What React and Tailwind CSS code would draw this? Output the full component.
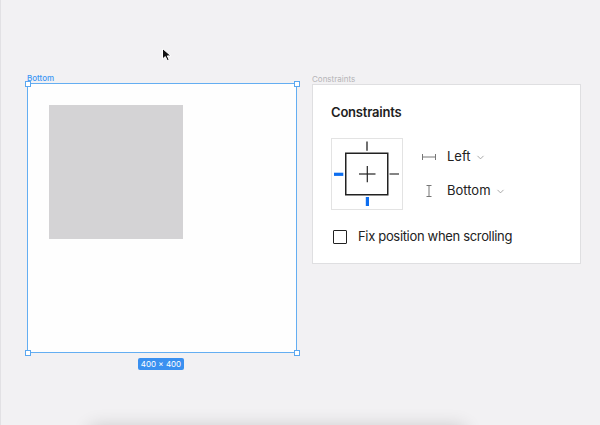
import { ChevronDown } from 'lucide-react'

const font = { fontFamily: 'Inter, "Noto Sans", sans-serif' }

function Handle({ className }) {
  return <div className={`absolute w-[6px] h-[6px] bg-white border border-[#5aa7f0] ${className}`} />
}

function ConstraintWidget() {
  return (
    <svg width="72" height="72" viewBox="0 0 72 72" className="shrink-0">
      <rect x="0.5" y="0.5" width="71" height="71" fill="#fff" stroke="#e3e3e3" />
      <rect x="14.75" y="15.25" width="42" height="41.5" fill="none" stroke="#222" strokeWidth="1.5" />
      <line x1="28" y1="36" x2="44.5" y2="36" stroke="#222" strokeWidth="1.2" />
      <line x1="36.3" y1="28" x2="36.3" y2="44.3" stroke="#222" strokeWidth="1.2" />
      <line x1="36" y1="3.5" x2="36" y2="12.7" stroke="#333" strokeWidth="1.4" />
      <line x1="58.5" y1="36" x2="68" y2="36" stroke="#333" strokeWidth="1.2" />
      <line x1="3" y1="36.3" x2="12.3" y2="36.3" stroke="#0d6ef0" strokeWidth="3.2" />
      <line x1="36.4" y1="59" x2="36.4" y2="68" stroke="#0d6ef0" strokeWidth="3.2" />
    </svg>
  )
}

function HIcon() {
  return (
    <svg width="14" height="8" viewBox="0 0 14 8">
      <path d="M0.5 1v6M13.5 1v6M0.5 4h13" stroke="#777" strokeWidth="1" fill="none" />
    </svg>
  )
}

function VIcon() {
  return (
    <svg width="14" height="12" viewBox="0 0 14 12">
      <path d="M4.5 0.5h5M4.5 11.5h5M7 0.5v11" stroke="#777" strokeWidth="1" fill="none" />
    </svg>
  )
}

function Cursor() {
  return (
    <svg width="14" height="16" viewBox="0 0 14 16" className="absolute left-[160px] top-[47px]">
      <path d="M1.5 1.5 L1.5 12 L4.3 9.6 L6.3 13.6 L8.2 12.7 L6.3 8.9 L10 8.9 Z" fill="#111" stroke="#fff" strokeWidth="1" strokeLinejoin="round" />
    </svg>
  )
}

export default function App() {
  return (
    <div style={font} className="relative w-[600px] h-[425px] overflow-hidden bg-[#f2f1f3] border-l border-[#e2e1e4]">
      <Cursor />
      <div className="flex pt-[74px] pl-[26px]">
        <div className="w-[270px]">
          <div className="text-[8px] leading-[9px] font-medium text-[#3d97f3]">Bottom</div>
          <div className="relative w-[270px] h-[270px] border-[1.5px] border-[#64aef2] bg-[#fefefe]">
            <Handle className="-left-[3.5px] -top-[3.5px]" />
            <Handle className="-right-[3.5px] -top-[3.5px]" />
            <Handle className="-left-[3.5px] -bottom-[3.5px]" />
            <Handle className="-right-[3.5px] -bottom-[3.5px]" />
            <div className="ml-[20.5px] mt-[20.5px] w-[134px] h-[134px] bg-[#d4d3d5]" />
          </div>
          <div className="flex justify-center mt-[5px] pr-[2px]">
            <div className="h-[12px] px-[3px] rounded-[2px] bg-[#3a90f0] text-white text-[8px] leading-[12px]">400 × 400</div>
          </div>
        </div>

        <div className="ml-[15px] w-[269px]">
          <div className="text-[8px] leading-[10px] text-[#b5b4b7]">Constraints</div>
          <div className="h-[180px] bg-white border border-[#dfdfe1] pl-[18px] pt-[19px]">
            <div className="text-[13px] leading-[16px] font-semibold tracking-[-0.2px] text-[#1e1e1e]">Constraints</div>
            <div className="flex mt-[18px]">
              <ConstraintWidget />
              <div className="ml-[19px] pt-[2px] text-[13px] text-[#222]">
                <div className="flex items-center h-[34px]">
                  <div className="w-[14px] flex justify-center"><HIcon /></div>
                  <span className="ml-[11px]">Left</span>
                  <ChevronDown size={11} strokeWidth={1.6} className="ml-[4px] text-[#8a8a8a]" />
                </div>
                <div className="flex items-center h-[34px]">
                  <div className="w-[14px] flex justify-center"><VIcon /></div>
                  <span className="ml-[11px]">Bottom</span>
                  <ChevronDown size={11} strokeWidth={1.6} className="ml-[4px] text-[#8a8a8a]" />
                </div>
              </div>
            </div>
            <div className="flex items-center mt-[17px] ml-[2px]">
              <div className="w-[14px] h-[14px] border-[1.5px] border-[#222] rounded-[1px]" />
              <span className="ml-[11px] text-[13px] tracking-[-0.33px] text-[#222]">Fix position when scrolling</span>
            </div>
          </div>
        </div>
      </div>
      <div className="ml-[88px] mt-[56px] w-[377px] h-[40px] rounded-[6px] bg-[#f2f1f3] shadow-[0_0_18px_rgba(0,0,0,0.16)]" />
    </div>
  )
}
